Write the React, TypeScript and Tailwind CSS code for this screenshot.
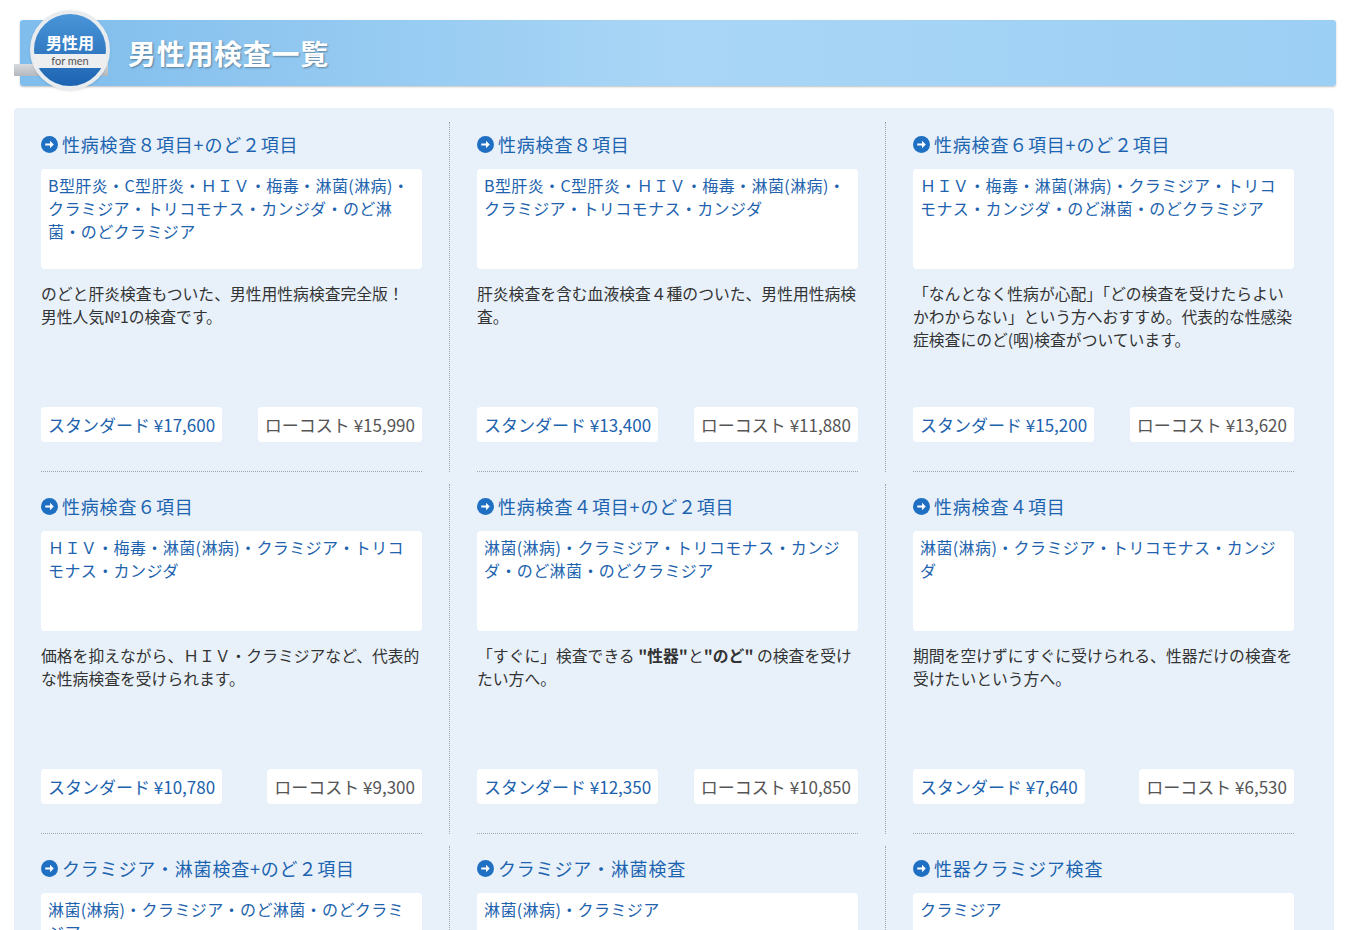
import React from 'react';

type Item = { title: string; tests: string; desc: React.ReactNode; std: string; low: string };

const items: Item[] = [
  { title: '性病検査８項目+のど２項目', tests: 'B型肝炎・C型肝炎・ＨＩＶ・梅毒・淋菌(淋病)・クラミジア・トリコモナス・カンジダ・のど淋菌・のどクラミジア', desc: <>のどと肝炎検査もついた、男性用性病検査完全版！<br />男性人気№1の検査です。</>, std: '¥17,600', low: '¥15,990' },
  { title: '性病検査８項目', tests: 'B型肝炎・C型肝炎・ＨＩＶ・梅毒・淋菌(淋病)・クラミジア・トリコモナス・カンジダ', desc: '肝炎検査を含む血液検査４種のついた、男性用性病検査。', std: '¥13,400', low: '¥11,880' },
  { title: '性病検査６項目+のど２項目', tests: 'ＨＩＶ・梅毒・淋菌(淋病)・クラミジア・トリコモナス・カンジダ・のど淋菌・のどクラミジア', desc: '「なんとなく性病が心配」「どの検査を受けたらよいかわからない」という方へおすすめ。代表的な性感染症検査にのど(咽)検査がついています。', std: '¥15,200', low: '¥13,620' },
  { title: '性病検査６項目', tests: 'ＨＩＶ・梅毒・淋菌(淋病)・クラミジア・トリコモナス・カンジダ', desc: '価格を抑えながら、ＨＩＶ・クラミジアなど、代表的な性病検査を受けられます。', std: '¥10,780', low: '¥9,300' },
  { title: '性病検査４項目+のど２項目', tests: '淋菌(淋病)・クラミジア・トリコモナス・カンジダ・のど淋菌・のどクラミジア', desc: <>「すぐに」検査できる <b>"性器"</b>と<b>"のど"</b> の検査を受けたい方へ。</>, std: '¥12,350', low: '¥10,850' },
  { title: '性病検査４項目', tests: '淋菌(淋病)・クラミジア・トリコモナス・カンジダ', desc: '期間を空けずにすぐに受けられる、性器だけの検査を受けたいという方へ。', std: '¥7,640', low: '¥6,530' },
  { title: 'クラミジア・淋菌検査+のど２項目', tests: '淋菌(淋病)・クラミジア・のど淋菌・のどクラミジア', desc: '', std: '', low: '' },
  { title: 'クラミジア・淋菌検査', tests: '淋菌(淋病)・クラミジア', desc: '', std: '', low: '' },
  { title: '性器クラミジア検査', tests: 'クラミジア', desc: '', std: '', low: '' },
];

function Arrow() {
  return (
    <svg width="17" height="17" viewBox="0 0 16 16" className="shrink-0">
      <circle cx="8" cy="8" r="8" fill="#1f6fc2" />
      <path d="M4 7h4.5V4.5L12 8l-3.5 3.5V9H4z" fill="#fff" />
    </svg>
  );
}

function Card({ it, last }: { it: Item; last: boolean }) {
  return (
    <div className="pl-[27px] pr-[28px] pt-[22px]">
      <div className={`relative ${last ? '' : "after:absolute after:right-[-28px] after:top-[-10px] after:bottom-0 after:border-r after:border-dotted after:border-[#9aa6b2] after:content-['']"}`}>
        <h3 className="flex items-center gap-[4px] text-[18px] tracking-[0.8px] leading-[24px] text-[#1d64b0]"><Arrow />{it.title}</h3>
        <div className="mt-[13px] h-[100px] rounded bg-white px-[7px] py-[5px] text-[16px] tracking-[0.4px] leading-[23px] text-[#2062ad]">{it.tests}</div>
        <p className="mt-[13px] h-[125px] text-[15.8px] leading-[23px] text-[#333]">{it.desc}</p>
        <div className="flex justify-between">
          <span className="rounded bg-white px-[7px] py-[5px] text-[17px] leading-[25px] text-[#2062ad]">スタンダード {it.std}</span>
          <span className="rounded bg-white px-[7px] py-[5px] text-[17px] leading-[25px] text-[#555]">ローコスト {it.low}</span>
        </div>
        <div className="mt-[29px] border-b border-dotted border-[#9aa6b2]" />
      </div>
    </div>
  );
}

export default function App() {
  return (
    <div className="min-h-[930px] bg-white px-[14px] pt-[20px]" style={{ fontFamily: '"Noto Sans CJK JP", "Noto Sans", sans-serif' }}>
      <div className="relative ml-[6px] mr-[-3px] flex h-[66px] items-center rounded-[3px] bg-gradient-to-r from-[#7fbdec] via-[#a9d6f6] to-[#9ccff4] shadow-[0_1px_2px_rgba(0,0,0,0.25)]">
        <div className="absolute left-[-6px] top-[44px] h-[12px] w-[94px] bg-gradient-to-b from-[#d8dbdf] to-[#b3b8be]" />
        <div className="absolute left-[10px] top-[-10px] flex h-[80px] w-[80px] flex-col items-center justify-center rounded-full border-[4px] border-[#e9ecef] bg-gradient-to-b from-[#4a95d8] to-[#1c64b2] shadow">
          <span className="text-[16px] font-bold leading-[20px] text-white">男性用</span>
          <span className="mt-[2px] w-[72px] bg-[#eceef0] text-center text-[11px] leading-[14px] text-[#555]" style={{ fontFamily: 'Lato, sans-serif' }}>for men</span>
        </div>
        <h1 className="ml-[108px] text-[28px] font-bold tracking-wide text-white [text-shadow:1px_1px_2px_rgba(0,0,0,0.35)]">男性用検査一覧</h1>
      </div>
      <div className="mt-[22px] mr-[-1px] rounded-t-[4px] bg-[#e8f1fa] pb-[40px] pr-[12px]">
        <div className="grid grid-cols-3 pt-[2px]">
          {items.map((it, i) => <Card key={i} it={it} last={i % 3 === 2} />)}
        </div>
      </div>
    </div>
  );
}
